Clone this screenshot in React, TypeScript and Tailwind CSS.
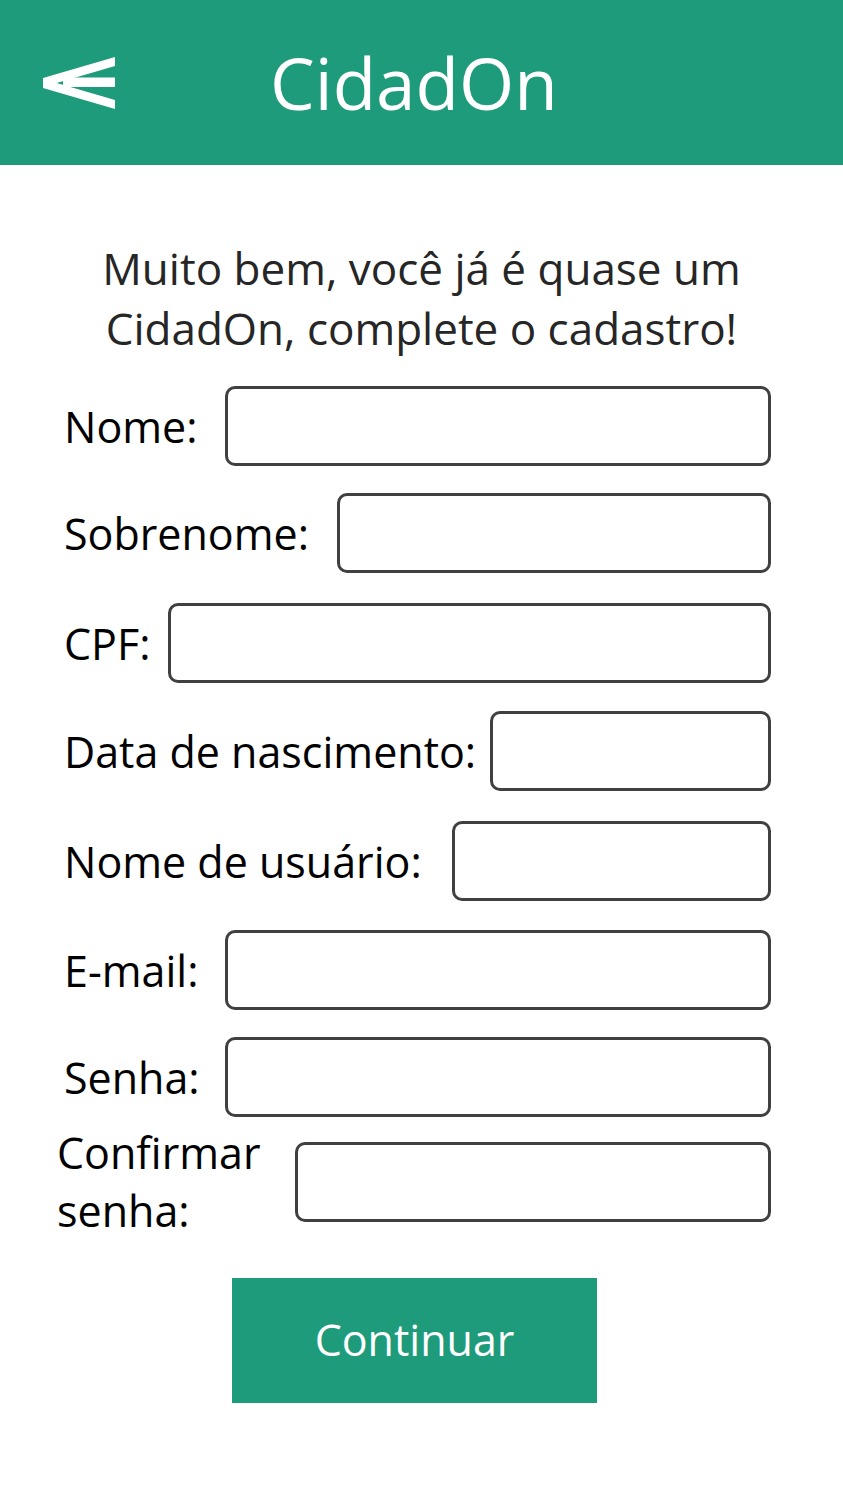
const fields = [
  { label: 'Nome:', width: 'w-[546px]', top: 'mt-[28px]' },
  { label: 'Sobrenome:', width: 'w-[434px]', top: 'mt-[27px]' },
  { label: 'CPF:', width: 'w-[603px]', top: 'mt-[30px]' },
  { label: 'Data de nascimento:', width: 'w-[281px]', top: 'mt-[28px]' },
  { label: 'Nome de usuário:', width: 'w-[319px]', top: 'mt-[30px]' },
  { label: 'E-mail:', width: 'w-[546px]', top: 'mt-[29px]' },
  { label: 'Senha:', width: 'w-[546px]', top: 'mt-[27px]' },
];

function BackArrow() {
  return (
    <svg width="80" height="65" viewBox="0 0 80 65" fill="white">
      <polygon points="3,28 75,7 75,16 3,37" />
      <polygon points="3,29 75,50 75,59 3,38" />
      <rect x="23" y="27.5" width="52" height="9.5" />
    </svg>
  );
}

export default function App() {
  return (
    <div className="w-[843px] h-[1500px] bg-white font-['Open_Sans',sans-serif]">
      <header className="h-[165px] bg-[#1e9b7a] flex items-center">
        <div className="ml-[40px]">
          <BackArrow />
        </div>
        <h1 className="ml-[150px] text-[71px] leading-none text-white">CidadOn</h1>
      </header>

      <p className="mt-[73px] text-center text-[44px] leading-[60px] text-[#262626]">
        Muito bem, você já é quase um
        <br />
        CidadOn, complete o cadastro!
      </p>

      <form className="pl-[64px] pr-[72px]">
        {fields.map((f) => (
          <div key={f.label} className={'flex items-center justify-between h-[80px] ' + f.top}>
            <label className="text-[43px] leading-none text-black whitespace-nowrap">{f.label}</label>
            <div className={'h-[80px] rounded-[10px] border-[3px] border-[#404040] bg-white ' + f.width} />
          </div>
        ))}
        <div className="flex items-center justify-between mt-[7px]">
          <label className="-ml-[7px] text-[43px] leading-[58px] text-black">
            Confirmar
            <br />
            senha:
          </label>
          <div className="h-[80px] w-[476px] rounded-[10px] border-[3px] border-[#404040] bg-white" />
        </div>
      </form>

      <button
        type="button"
        className="ml-[232px] mt-[38px] w-[365px] h-[125px] bg-[#1e9b7a] text-white text-[43px] flex items-center justify-center"
      >
        Continuar
      </button>
    </div>
  );
}
